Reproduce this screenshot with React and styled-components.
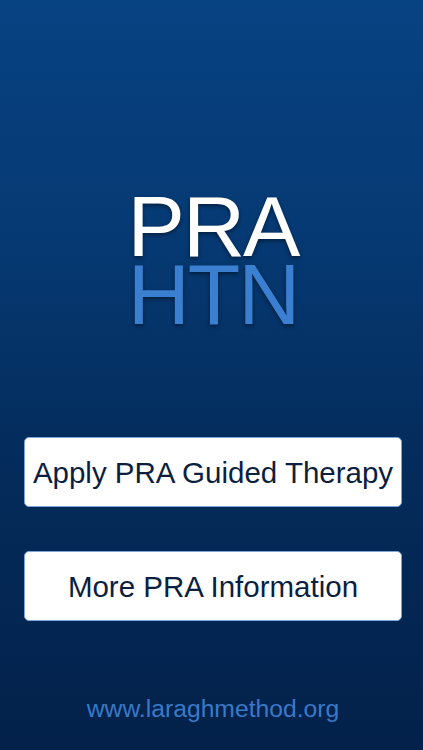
import React from "react";
import styled, { createGlobalStyle } from "styled-components";

const Global = createGlobalStyle`
  html, body { margin: 0; padding: 0; }
  body { font-family: "Liberation Sans", Arial, sans-serif; }
`;

const Screen = styled.div`
  width: 423px;
  height: 750px;
  box-sizing: border-box;
  background: linear-gradient(180deg, #074282 0%, #063a74 30%, #042c5c 60%, #03214a 100%);
  display: flex;
  flex-direction: column;
  align-items: center;
  padding: 192px 21px 0 24px;
`;

const Logo = styled.div`
  display: flex;
  flex-direction: column;
  align-items: center;
  font-size: 86px;
  line-height: 68px;
  letter-spacing: -2px;
  text-shadow: 0 2px 4px rgba(0, 0, 0, 0.45);
`;

const LogoLine = styled.div`
  color: ${(p) => p.$color};
`;

const Buttons = styled.div`
  display: flex;
  flex-direction: column;
  gap: 44px;
  width: 100%;
  margin-top: 109px;
`;

const Button = styled.button`
  width: 100%;
  height: 70px;
  background: #ffffff;
  border: 1px solid #7fa6d6;
  border-radius: 5px;
  color: #0c1f3e;
  font-family: "Liberation Sans", Arial, sans-serif;
  font-size: 29.5px;
  padding: 2px 0 0;
  cursor: pointer;
`;

const Footer = styled.div`
  margin-top: 74px;
  color: #3a79c6;
  font-size: 24.7px;
`;

export default function App() {
  return (
    <>
      <Global />
      <Screen>
        <Logo>
          <LogoLine $color="#ffffff">PRA</LogoLine>
          <LogoLine $color="#3a7fd0">HTN</LogoLine>
        </Logo>
        <Buttons>
          <Button>Apply PRA Guided Therapy</Button>
          <Button>More PRA Information</Button>
        </Buttons>
        <Footer>www.laraghmethod.org</Footer>
      </Screen>
    </>
  );
}
